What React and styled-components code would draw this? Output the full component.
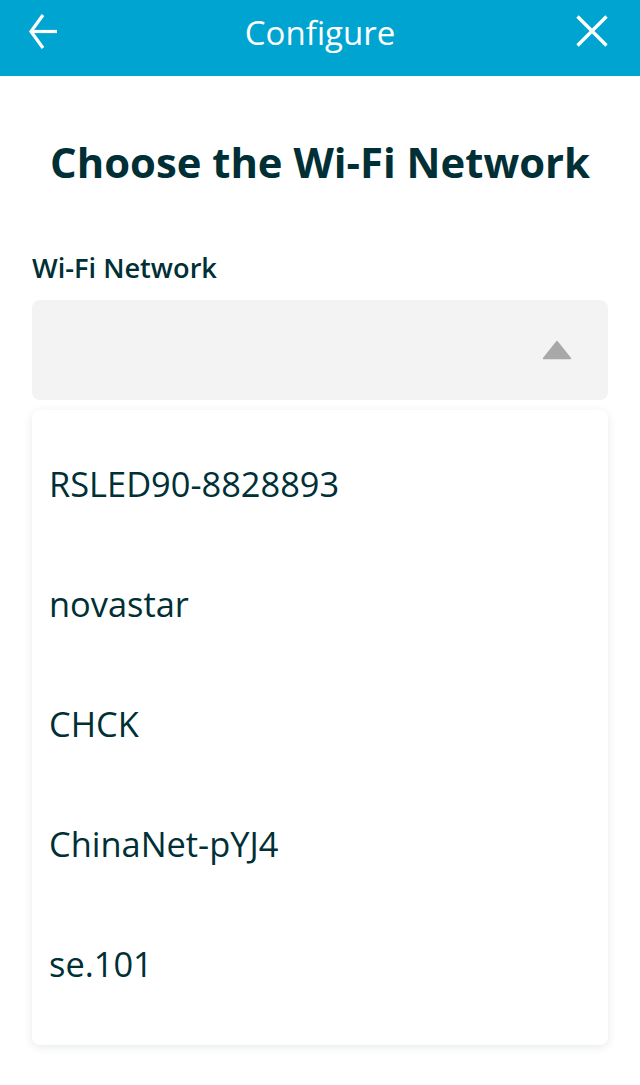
import React from "react";
import styled, { createGlobalStyle } from "styled-components";

const Global = createGlobalStyle`
  html, body { margin: 0; padding: 0; background: #fff; }
  body { font-family: "Open Sans", "Noto Sans", sans-serif; }
  * { box-sizing: border-box; }
`;

const Page = styled.div`
  width: 640px;
  min-height: 1085px;
  background: #fff;
`;

const Header = styled.header`
  height: 76px;
  background: #00a4d1;
  display: flex;
  align-items: flex-start;
  justify-content: space-between;
  padding: 14px 32px 0 28px;
  position: relative;
`;

const HeaderTitle = styled.h1`
  margin: 0;
  font-size: 33px;
  font-weight: 500;
  color: #fff;
  position: absolute;
  left: 0;
  right: 0;
  top: 0;
  text-align: center;
  line-height: 66px;
  pointer-events: none;
`;

const IconButton = styled.button`
  background: none;
  border: 0;
  padding: 0;
  margin-top: ${(p) => p.$offset || 0}px;
  display: flex;
  cursor: pointer;
`;

const Content = styled.main`
  padding: 0 32px;
`;

const Title = styled.h2`
  margin: 0;
  padding-top: 61px;
  text-align: center;
  font-size: 41.8px;
  font-weight: 700;
  line-height: 50px;
  color: #002f36;
`;

const Label = styled.div`
  margin-top: 66px;
  font-size: 27.2px;
  font-weight: 600;
  color: #002f36;
  line-height: 30px;
`;

const SelectBox = styled.div`
  margin-top: 17px;
  height: 100px;
  border-radius: 8px;
  background: #f3f3f3;
  display: flex;
  align-items: center;
  justify-content: flex-end;
  padding-right: 36px;
`;

const List = styled.ul`
  list-style: none;
  margin: 10px 0 0;
  padding: 13px 0 22px;
  background: #fff;
  border-radius: 8px;
  box-shadow: 0 2px 10px rgba(0, 47, 54, 0.1);
`;

const Item = styled.li`
  height: 120px;
  display: flex;
  align-items: center;
  padding-left: 17px;
  font-size: 34.4px;
  color: #002f36;
`;

const networks = ["RSLED90-8828893", "novastar", "CHCK", "ChinaNet-pYJ4", "se.101"];

export default function App() {
  return (
    <Page>
      <Global />
      <Header>
        <IconButton aria-label="Back">
          <svg width="30" height="35" viewBox="0 0 30 35" fill="none" stroke="#fff" strokeWidth="3.2">
            <path d="M29 17.5H4" />
            <path d="M15 1L3 17.5 15 34" />
          </svg>
        </IconButton>
        <HeaderTitle>Configure</HeaderTitle>
        <IconButton aria-label="Close" $offset={1}>
          <svg width="32" height="32" viewBox="0 0 32 32" fill="none" stroke="#fff" strokeWidth="3.4">
            <path d="M1.5 1.5L30.5 30.5M30.5 1.5L1.5 30.5" />
          </svg>
        </IconButton>
      </Header>
      <Content>
        <Title>Choose the Wi-Fi Network</Title>
        <Label>Wi-Fi Network</Label>
        <SelectBox>
          <svg width="30" height="20" viewBox="0 0 30 20">
            <path d="M15 1.5 L28.5 18.5 L1.5 18.5 Z" fill="#a8a8a8" stroke="#a8a8a8" strokeWidth="1.5" strokeLinejoin="round" />
          </svg>
        </SelectBox>
        <List>
          {networks.map((n) => (
            <Item key={n}>{n}</Item>
          ))}
        </List>
      </Content>
    </Page>
  );
}
